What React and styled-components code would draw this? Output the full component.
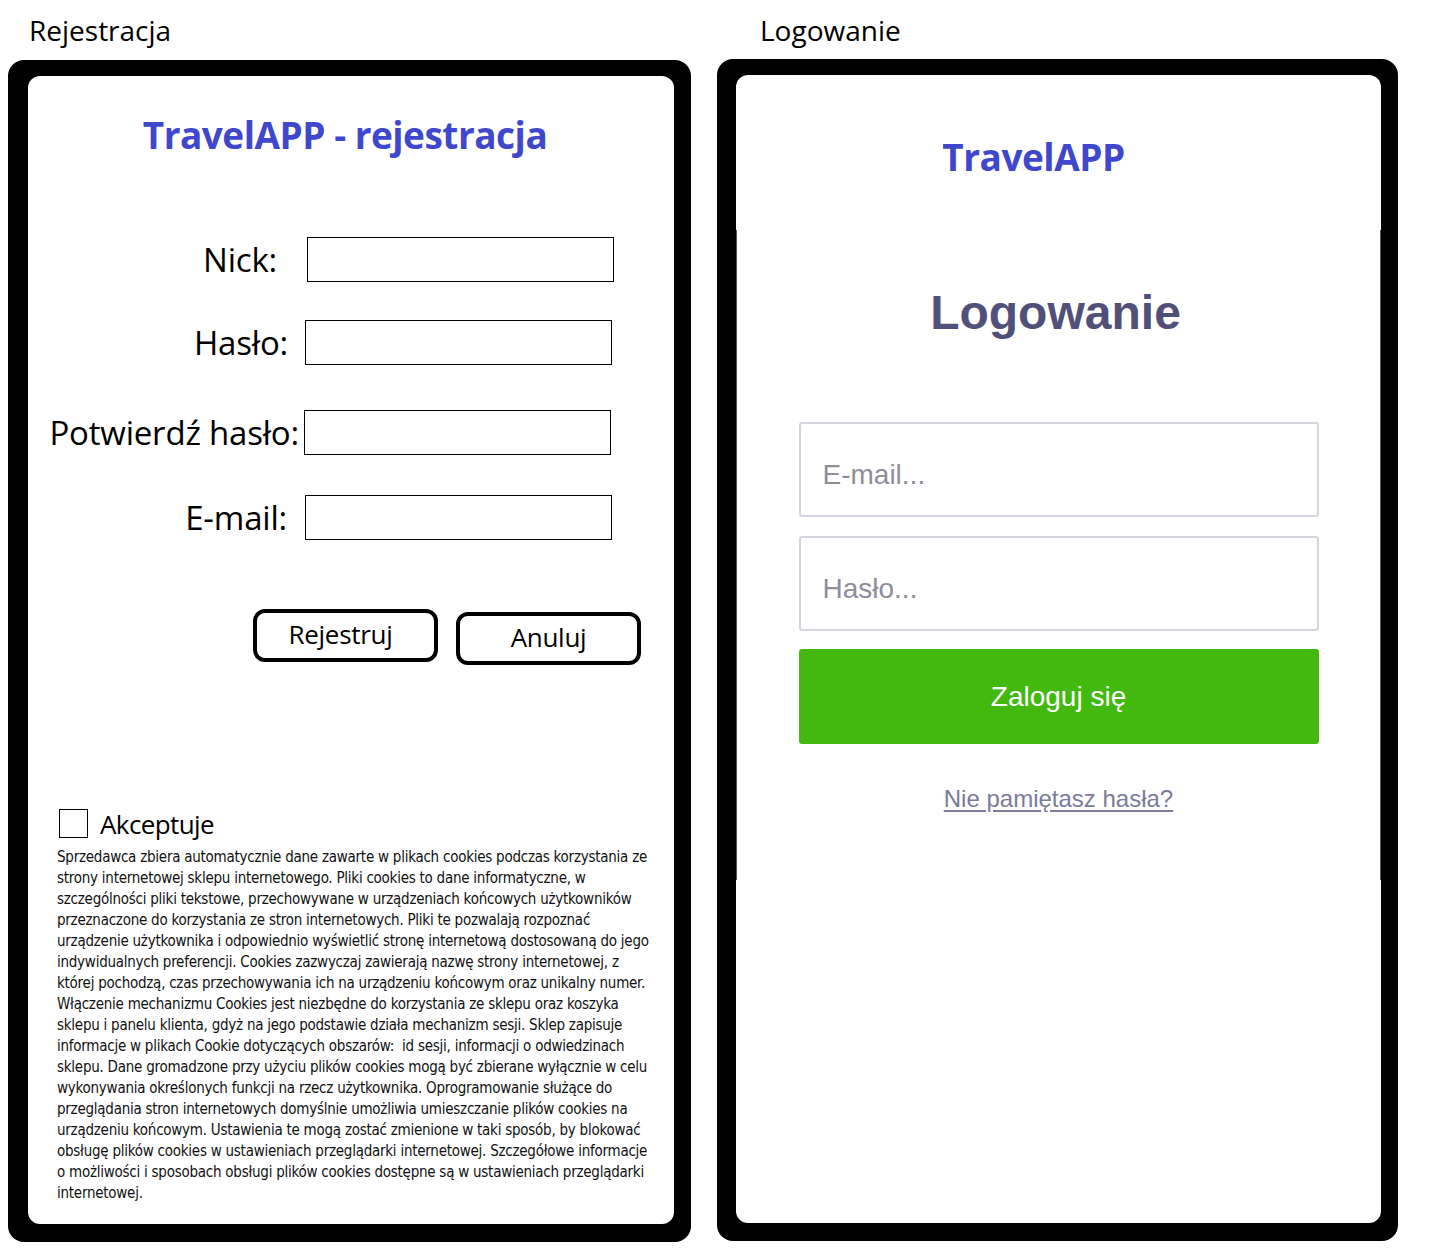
import styled, { createGlobalStyle } from 'styled-components';

const GlobalStyle = createGlobalStyle`
  html, body {
    margin: 0;
    padding: 0;
    background: #fff;
  }
  body {
    font-family: "Open Sans", "Liberation Sans", sans-serif;
    color: #000;
  }
`;

const Page = styled.div`
  display: flex;
  align-items: flex-start;
  gap: 26px;
  padding-left: 8px;
  width: 1455px;
  height: 1253px;
  box-sizing: border-box;
`;

const Column = styled.section`
  display: flex;
  flex-direction: column;
`;

const Caption = styled.div`
  height: ${(p) => p.$height}px;
  padding-left: ${(p) => p.$indent}px;
  display: flex;
  align-items: center;
  font-family: "Open Sans", sans-serif;
  font-size: 28px;
  line-height: 1;
`;

const Frame = styled.div`
  background: #000;
  width: ${(p) => p.$width}px;
  height: 1182px;
  box-sizing: border-box;
  border-radius: 16px;
  padding: 16px 17px 18px ${(p) => p.$left}px;
  display: flex;
`;

const Card = styled.div`
  flex: 1;
  min-width: 0;
  overflow: hidden;
  background: #fff;
  border-radius: 12px;
  display: flex;
  flex-direction: column;
`;

/* ---------- registration ---------- */

const RegTitle = styled.h1`
  margin: 37px 0 0;
  padding-right: 12px;
  text-align: center;
  font-family: "Open Sans", sans-serif;
  font-weight: 700;
  font-size: 37px;
  letter-spacing: -0.5px;
  line-height: 44px;
  color: #3f48cc;
`;

const FieldRow = styled.div`
  display: flex;
  align-items: center;
  margin-top: ${(p) => p.$gap}px;
  height: 45px;
`;

const FieldLabel = styled.label`
  width: ${(p) => p.$end - 28}px;
  flex: none;
  text-align: right;
  font-family: "Open Sans", sans-serif;
  font-size: 33px;
  letter-spacing: -0.2px;
  line-height: 1;
  white-space: nowrap;
`;

const BoxInput = styled.input`
  flex: none;
  margin-left: ${(p) => p.$shift}px;
  width: 307px;
  height: 45px;
  box-sizing: border-box;
  border: 1px solid #000;
  background: #fff;
  outline: none;
  padding: 0 6px;
`;

const ButtonRow = styled.div`
  display: flex;
  align-items: flex-start;
  gap: 18px;
  margin-top: 69px;
  padding-left: 225px;
`;

const OutlineButton = styled.button`
  width: 185px;
  height: 53px;
  margin-top: ${(p) => p.$drop || 0}px;
  box-sizing: border-box;
  border: 4px solid #000;
  border-radius: 12px;
  background: #fff;
  color: #000;
  font-family: "Open Sans", sans-serif;
  font-size: 26px;
  letter-spacing: -0.3px;
  line-height: 1;
  padding: 0 ${(p) => p.$nudge || 0}px 3px 0;
`;

const AcceptRow = styled.div`
  display: flex;
  align-items: center;
  gap: 12px;
  margin-top: 144px;
  padding-left: 31px;
`;

const CheckBox = styled.span`
  width: 29px;
  height: 29px;
  box-sizing: border-box;
  border: 1px solid #000;
  flex: none;
`;

const AcceptText = styled.span`
  font-family: "Open Sans", sans-serif;
  font-size: 26px;
  letter-spacing: -0.6px;
  line-height: 1;
`;

const Terms = styled.p`
  margin: 9px 0 0;
  padding-left: 29px;
  font-family: "DejaVu Sans Condensed", "Liberation Sans", sans-serif;
  font-size: 15px;
  letter-spacing: -0.25px;
  line-height: 21px;
  color: #111;
  white-space: nowrap;
`;

/* ---------- login ---------- */

const LoginTitle = styled.h1`
  margin: 60px 0 0;
  padding-right: 50px;
  text-align: center;
  font-family: "Open Sans", sans-serif;
  font-weight: 700;
  font-size: 37px;
  letter-spacing: -0.5px;
  line-height: 44px;
  color: #3f48cc;
`;

const Sheet = styled.div`
  margin-top: 51px;
  height: 650px;
  border-left: 1px solid #555;
  border-right: 1px solid #555;
  display: flex;
  flex-direction: column;
  align-items: center;
`;

const SheetHeading = styled.h2`
  margin: 55px 0 0;
  font-family: "Liberation Sans", Arial, sans-serif;
  font-weight: 700;
  font-size: 48px;
  line-height: 56px;
  color: #50507a;
  padding-right: 6px;
`;

const Stack = styled.div`
  width: 520px;
  margin-top: 81px;
  display: flex;
  flex-direction: column;
  gap: 19px;
`;

const LoginInput = styled.input`
  height: 95px;
  box-sizing: border-box;
  border: 2px solid #d5d5de;
  border-radius: 3px;
  padding: 10px 22px 0;
  font-family: "Liberation Sans", Arial, sans-serif;
  font-size: 28px;
  color: #333;
  outline: none;
  &::placeholder {
    color: #8e8e9a;
  }
`;

const LoginButton = styled.button`
  height: 95px;
  margin-top: -1px;
  border: none;
  border-radius: 3px;
  background: #43b80f;
  color: #fff;
  font-family: "Liberation Sans", Arial, sans-serif;
  font-size: 28px;
  padding: 0;
`;

const ForgotLink = styled.a`
  margin-top: 41px;
  font-family: "Liberation Sans", Arial, sans-serif;
  font-size: 24px;
  color: #7b7b9a;
  text-decoration: underline;
  text-underline-offset: 3px;
  cursor: pointer;
`;

const fields = [
  { label: 'Nick:', end: 277, input: 307, gap: 80 },
  { label: 'Hasło:', end: 288, input: 305, gap: 38 },
  { label: 'Potwierdź hasło:', end: 299, input: 304, gap: 45 },
  { label: 'E-mail:', end: 287, input: 305, gap: 40 },
];

const termsLines = [
  'Sprzedawca zbiera automatycznie dane zawarte w plikach cookies podczas korzystania ze',
  'strony internetowej sklepu internetowego. Pliki cookies to dane informatyczne, w',
  'szczególności pliki tekstowe, przechowywane w urządzeniach końcowych użytkowników',
  'przeznaczone do korzystania ze stron internetowych. Pliki te pozwalają rozpoznać',
  'urządzenie użytkownika i odpowiednio wyświetlić stronę internetową dostosowaną do jego',
  'indywidualnych preferencji. Cookies zazwyczaj zawierają nazwę strony internetowej, z',
  'której pochodzą, czas przechowywania ich na urządzeniu końcowym oraz unikalny numer.',
  'Włączenie mechanizmu Cookies jest niezbędne do korzystania ze sklepu oraz koszyka',
  'sklepu i panelu klienta, gdyż na jego podstawie działa mechanizm sesji. Sklep zapisuje',
  'informacje w plikach Cookie dotyczących obszarów:\u00a0 id sesji, informacji o odwiedzinach',
  'sklepu. Dane gromadzone przy użyciu plików cookies mogą być zbierane wyłącznie w celu',
  'wykonywania określonych funkcji na rzecz użytkownika. Oprogramowanie służące do',
  'przeglądania stron internetowych domyślnie umożliwia umieszczanie plików cookies na',
  'urządzeniu końcowym. Ustawienia te mogą zostać zmienione w taki sposób, by blokować',
  'obsługę plików cookies w ustawieniach przeglądarki internetowej. Szczegółowe informacje',
  'o możliwości i sposobach obsługi plików cookies dostępne są w ustawieniach przeglądarki',
  'internetowej.',
];

export default function App() {
  return (
    <>
      <GlobalStyle />
      <Page>
        <Column>
          <Caption $height={60} $indent={21}>Rejestracja</Caption>
          <Frame $width={683} $left={20}>
            <Card>
              <RegTitle>TravelAPP - rejestracja</RegTitle>
              {fields.map((f) => (
                <FieldRow key={f.label} $gap={f.gap}>
                  <FieldLabel $end={f.end}>{f.label}</FieldLabel>
                  <BoxInput $shift={f.input - f.end} />
                </FieldRow>
              ))}
              <ButtonRow>
                <OutlineButton $nudge={10}>Rejestruj</OutlineButton>
                <OutlineButton $drop={3}>Anuluj</OutlineButton>
              </ButtonRow>
              <AcceptRow>
                <CheckBox />
                <AcceptText>Akceptuje</AcceptText>
              </AcceptRow>
              <Terms>
                {termsLines.map((line, i) => (
                  <span key={i}>
                    {line}
                    <br />
                  </span>
                ))}
              </Terms>
            </Card>
          </Frame>
        </Column>
        <Column>
          <Caption $height={59} $indent={43}>Logowanie</Caption>
          <Frame $width={681} $left={19}>
            <Card>
              <LoginTitle>TravelAPP</LoginTitle>
              <Sheet>
                <SheetHeading>Logowanie</SheetHeading>
                <Stack>
                  <LoginInput placeholder="E-mail..." />
                  <LoginInput type="password" placeholder="Hasło..." />
                  <LoginButton>Zaloguj się</LoginButton>
                </Stack>
                <ForgotLink>Nie pamiętasz hasła?</ForgotLink>
              </Sheet>
            </Card>
          </Frame>
        </Column>
      </Page>
    </>
  );
}
